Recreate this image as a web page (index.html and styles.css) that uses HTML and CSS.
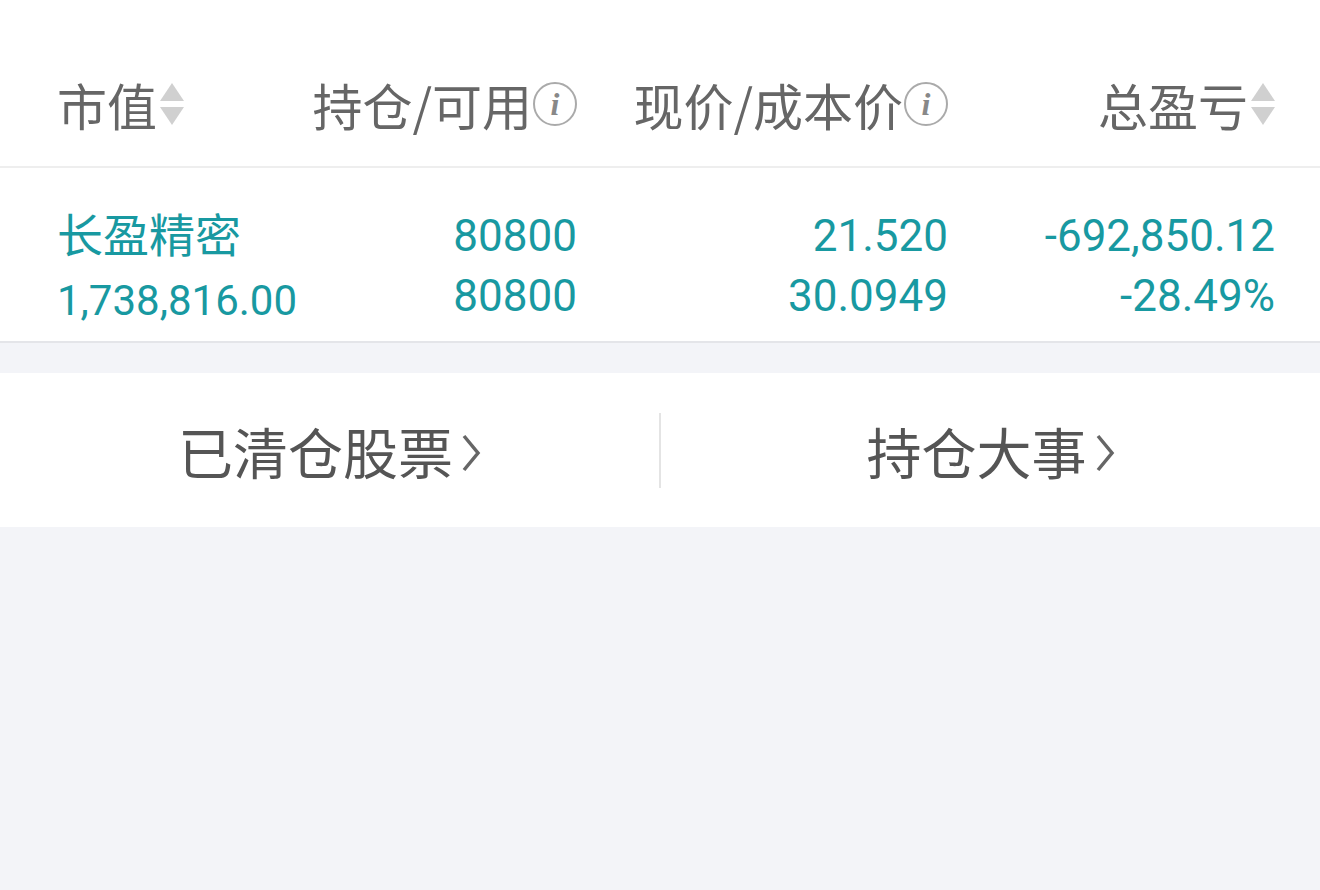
FILE: index.html
```html
<html>
<head>
    <meta charset="utf-8">
    <title>持仓</title>
    <link rel="stylesheet" href="styles.css">
</head>
<body>
    <div class="head">
        <div class="cell left">市值<svg class="sort" viewBox="0 0 24 44"><path d="M12 1 L24 19 L0 19 Z"/><path d="M0 25 L24 25 L12 43 Z"/></svg></div>
        <div class="cell">持仓/可用<span class="info">i</span></div>
        <div class="cell">现价/成本价<span class="info">i</span></div>
        <div class="cell">总盈亏<svg class="sort" viewBox="0 0 24 44"><path d="M12 1 L24 19 L0 19 Z"/><path d="M0 25 L24 25 L12 43 Z"/></svg></div>
    </div>

    <div class="row">
        <div class="col left">
            <div class="name">长盈精密</div>
            <div class="mv">1,738,816.00</div>
        </div>
        <div class="col">
            <div class="num">80800</div>
            <div class="num">80800</div>
        </div>
        <div class="col">
            <div class="num">21.520</div>
            <div class="num">30.0949</div>
        </div>
        <div class="col">
            <div class="num">-692,850.12</div>
            <div class="num">-28.49%</div>
        </div>
    </div>

    <div class="links">
        <div class="link">已清仓股票<svg class="arr" viewBox="0 0 20 40"><path d="M3 3 L17 20 L3 37"/></svg></div>
        <div class="sep"></div>
        <div class="link">持仓大事<svg class="arr" viewBox="0 0 20 40"><path d="M3 3 L17 20 L3 37"/></svg></div>
    </div>
</body>
</html>
```

FILE: styles.css
```css
* {
    margin: 0;
    padding: 0;
}

body {
    background: #f3f4f8;
    font-family: "Noto Sans CJK SC", sans-serif;
}

.head,
.row {
    display: grid;
    grid-template-columns: 243px 277px 371px 327px;
    padding: 0 45px 0 57px;
    background: #fff;
}

.head {
    height: 166px;
    border-bottom: 2px solid #eeeeee;
    align-items: center;
}

.cell {
    display: flex;
    align-items: center;
    justify-content: flex-end;
    white-space: nowrap;
    font-size: 50px;
    color: #666;
    padding-top: 42px;
}

.left {
    justify-content: flex-start;
    text-align: left;
}

.sort {
    width: 24px;
    height: 44px;
    fill: #d0d0d0;
    margin-left: 3px;
}

.info {
    width: 40px;
    height: 40px;
    border: 2px solid #aaa;
    border-radius: 50%;
    font-family: "Liberation Serif", serif;
    font-style: italic;
    font-weight: bold;
    font-size: 32px;
    line-height: 40px;
    text-align: center;
    color: #888;
    margin-left: 1px;
}

.row {
    height: 173px;
    border-bottom: 2px solid #e4e5e9;
    color: #1899a1;
}

.col {
    text-align: right;
    padding-top: 38px;
}

.col.left {
    text-align: left;
    padding-top: 32px;
}

.num {
    font-family: Roboto, sans-serif;
    font-size: 44px;
    line-height: 60px;
}

.name {
    font-size: 46px;
    line-height: 64px;
}

.mv {
    font-family: Roboto, sans-serif;
    font-size: 42px;
    line-height: 74px;
}

.links {
    display: flex;
    align-items: center;
    height: 154px;
    margin-top: 30px;
    background: #fff;
}

.link {
    flex: 1;
    display: flex;
    align-items: center;
    justify-content: center;
    font-size: 55px;
    color: #555;
}

.arr {
    width: 20px;
    height: 40px;
    fill: none;
    stroke: #666;
    stroke-width: 3.5;
    margin-left: 8px;
    margin-top: 6px;
}

.sep {
    width: 2px;
    height: 75px;
    background: #e4e4e4;
}
```
